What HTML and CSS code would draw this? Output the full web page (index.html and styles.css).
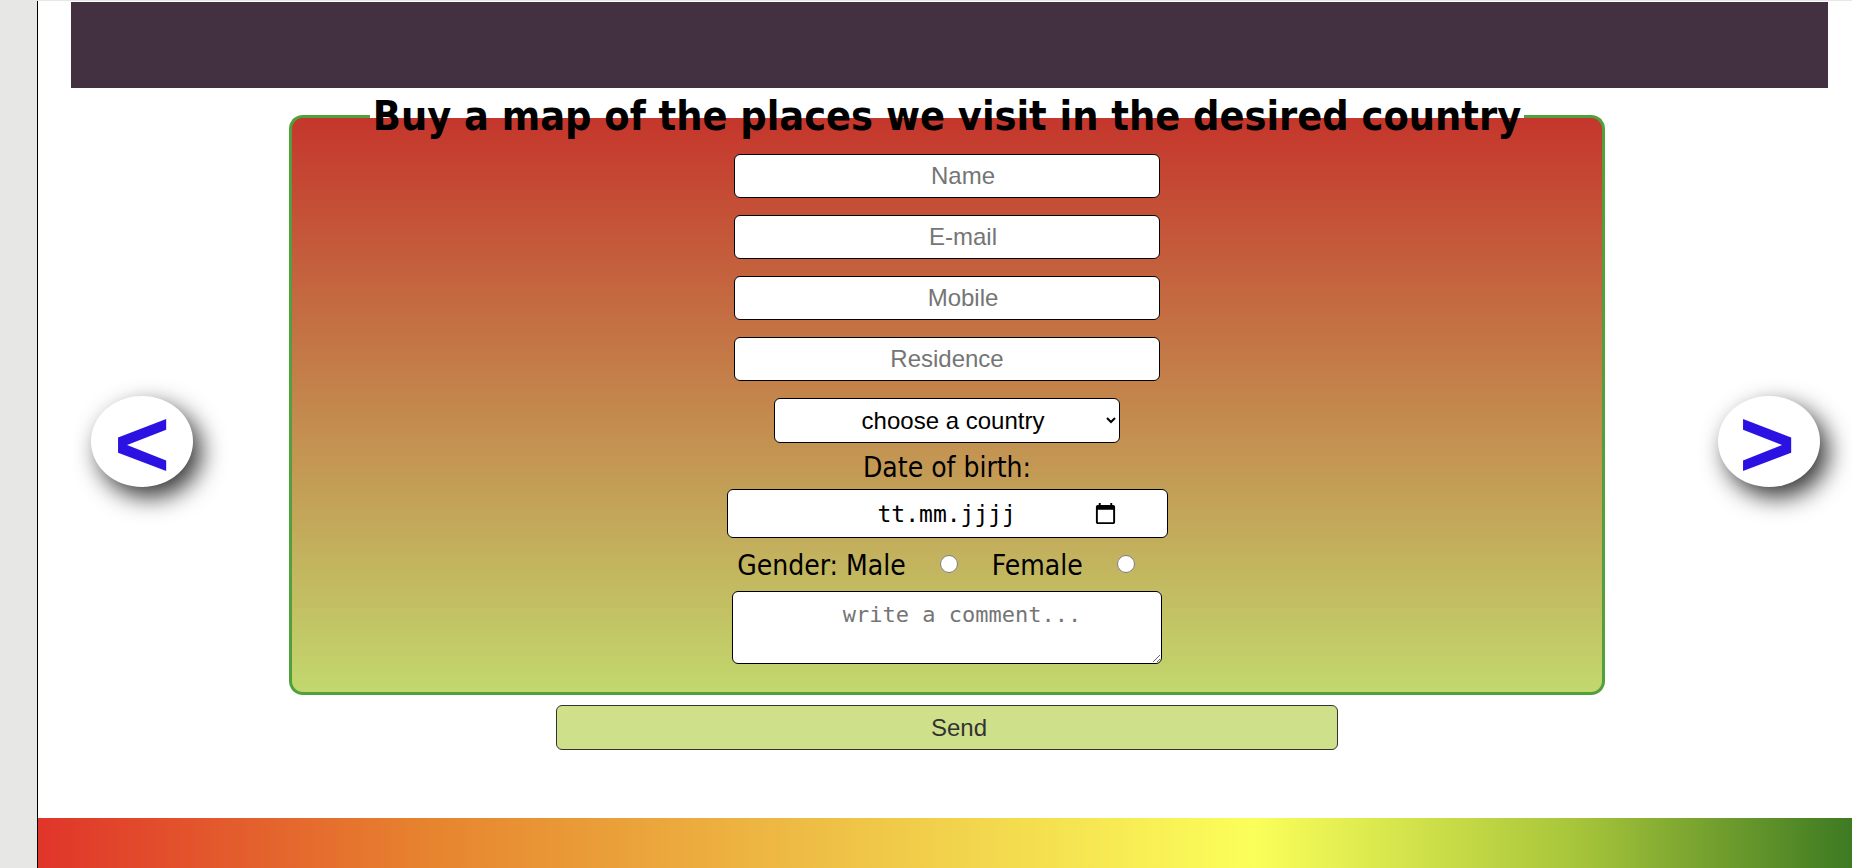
FILE: index.html
```html
<!DOCTYPE html>
<html lang="en">
<head>
<meta charset="utf-8">
<title>Buy a map</title>
<link rel="stylesheet" href="styles.css">
</head>
<body>
<div class="page">
  <header class="topbar"></header>
  <div class="stage">
    <button class="nav nav-prev" type="button">&lt;</button>
    <form class="order">
      <fieldset class="box">
        <legend class="title">Buy a map of the places we visit in the desired country</legend>
        <div class="fields">
          <input class="field shifted" type="text" placeholder="Name">
          <input class="field shifted" type="text" placeholder="E-mail">
          <input class="field shifted" type="text" placeholder="Mobile">
          <input class="field" type="text" placeholder="Residence">
          <select class="country">
            <option>choose a country</option>
          </select>
          <label class="dob-label">Date of birth:</label>
          <div class="date">
            <span class="date-text">tt.mm.jjjj</span>
            <svg class="cal" width="23" height="23" viewBox="0 0 24 24"><path d="M20 3h-1V1h-2v2H7V1H5v2H4c-1.1 0-2 .9-2 2v16c0 1.1.9 2 2 2h16c1.1 0 2-.9 2-2V5c0-1.1-.9-2-2-2zm0 18H4V8h16v13z" fill="#000"/></svg>
          </div>
          <div class="gender">
            <span>Gender: Male</span>
            <input type="radio" name="gender">
            <span>Female</span>
            <input type="radio" name="gender">
          </div>
          <textarea class="comment" placeholder="write a comment..."></textarea>
        </div>
      </fieldset>
      <button class="send" type="button">Send</button>
    </form>
    <button class="nav nav-next" type="button">&gt;</button>
  </div>
  <div class="rainbow"></div>
</div>
</body>
</html>
```
FILE: styles.css
```css
html, body {
  margin: 0;
  padding: 0;
}
body {
  background: #e7e8e6;
  font-family: "DejaVu Sans Condensed", "DejaVu Sans", sans-serif;
  font-stretch: condensed;
  overflow: hidden;
}
.page {
  margin: 1px 0 0 37px;
  height: 867px;
  border-left: 1px solid #000;
  background: #fff;
  display: flex;
  flex-direction: column;
}
.topbar {
  height: 86px;
  margin: 1px 24px 0 33px;
  background: #433142;
  flex: none;
}
.stage {
  display: flex;
  align-items: flex-start;
  margin-top: 6px;
}
.nav {
  flex: none;
  width: 102px;
  height: 91px;
  margin-top: 302px;
  padding: 4px 0 0;
  border: 0;
  border-radius: 50%;
  background: #fff;
  box-shadow: 8px 10px 25px rgba(0, 0, 0, 0.8);
  color: #2b12e3;
  font: bold 96px/1 "Liberation Sans", Arial, sans-serif;
  display: flex;
  align-items: center;
  justify-content: center;
}
.nav-prev {
  margin-left: 53px;
  margin-right: 96px;
}
.nav-next {
  margin-left: 113px;
  padding-right: 4px;
}
.order {
  width: 1316px;
  display: flex;
  flex-direction: column;
  align-items: center;
}
.box {
  box-sizing: border-box;
  width: 1316px;
  margin: 0;
  padding: 0 0 28px;
  border: 3px solid #51a03b;
  border-radius: 14px;
  background: linear-gradient(#c5362c, #c2d86d);
}
.title {
  margin: 0 auto;
  padding: 0 3px;
  font-size: 41px;
  line-height: 44px;
  font-weight: bold;
  color: #000;
}
.fields {
  display: flex;
  flex-direction: column;
  align-items: center;
  padding-top: 16px;
}
.field {
  box-sizing: border-box;
  width: 426px;
  height: 44px;
  margin: 0 0 17px;
  padding: 0;
  border: 1px solid #000;
  border-radius: 6px;
  background: #fff;
  font: 24px "Liberation Sans", Arial, sans-serif;
  text-align: center;
}
.field.shifted {
  padding-left: 32px;
}
.field::placeholder,
.comment::placeholder {
  color: #757575;
}
.country {
  box-sizing: border-box;
  width: 346px;
  height: 45px;
  padding-left: 24px;
  border: 1px solid #000;
  border-radius: 6px;
  background: #fff;
  color: #000;
  font: 24px "Liberation Sans", Arial, sans-serif;
  text-align: center;
}
.dob-label {
  margin-top: 10px;
  font-size: 28px;
  line-height: 30px;
  color: #000;
}
.date {
  box-sizing: border-box;
  width: 441px;
  height: 49px;
  margin-top: 6px;
  padding-left: 150px;
  border: 1px solid #000;
  border-radius: 6px;
  background: #fff;
  display: flex;
  align-items: center;
}
.date-text {
  font: 23px "DejaVu Sans Mono", monospace;
  font-stretch: normal;
  color: #000;
}
.cal {
  margin-left: 78px;
}
.gender {
  display: flex;
  align-items: center;
  gap: 34px;
  margin-top: 13px;
  padding-right: 22px;
  font-size: 28px;
  line-height: 30px;
}
.gender input {
  width: 18px;
  height: 18px;
  margin: 0 0 4px;
}
.comment {
  box-sizing: border-box;
  width: 430px;
  height: 73px;
  margin-top: 10px;
  padding: 10px 2px 2px 32px;
  border: 1px solid #000;
  border-radius: 6px;
  font: 22px "DejaVu Sans Mono", monospace;
  font-stretch: normal;
  text-align: center;
}
.send {
  box-sizing: border-box;
  width: 782px;
  height: 45px;
  margin-top: 10px;
  padding-left: 30px;
  border: 1px solid #333;
  border-radius: 6px;
  background: #cfe08a;
  color: #333;
  font: 24px "Liberation Sans", Arial, sans-serif;
}
.rainbow {
  margin-top: auto;
  height: 50px;
  flex: none;
  background: linear-gradient(to right, #e0352a 0%, #e7852f 22%, #efc447 45%, #fbff5a 67%, #a6c43a 85%, #3d7a22 100%);
}
```
